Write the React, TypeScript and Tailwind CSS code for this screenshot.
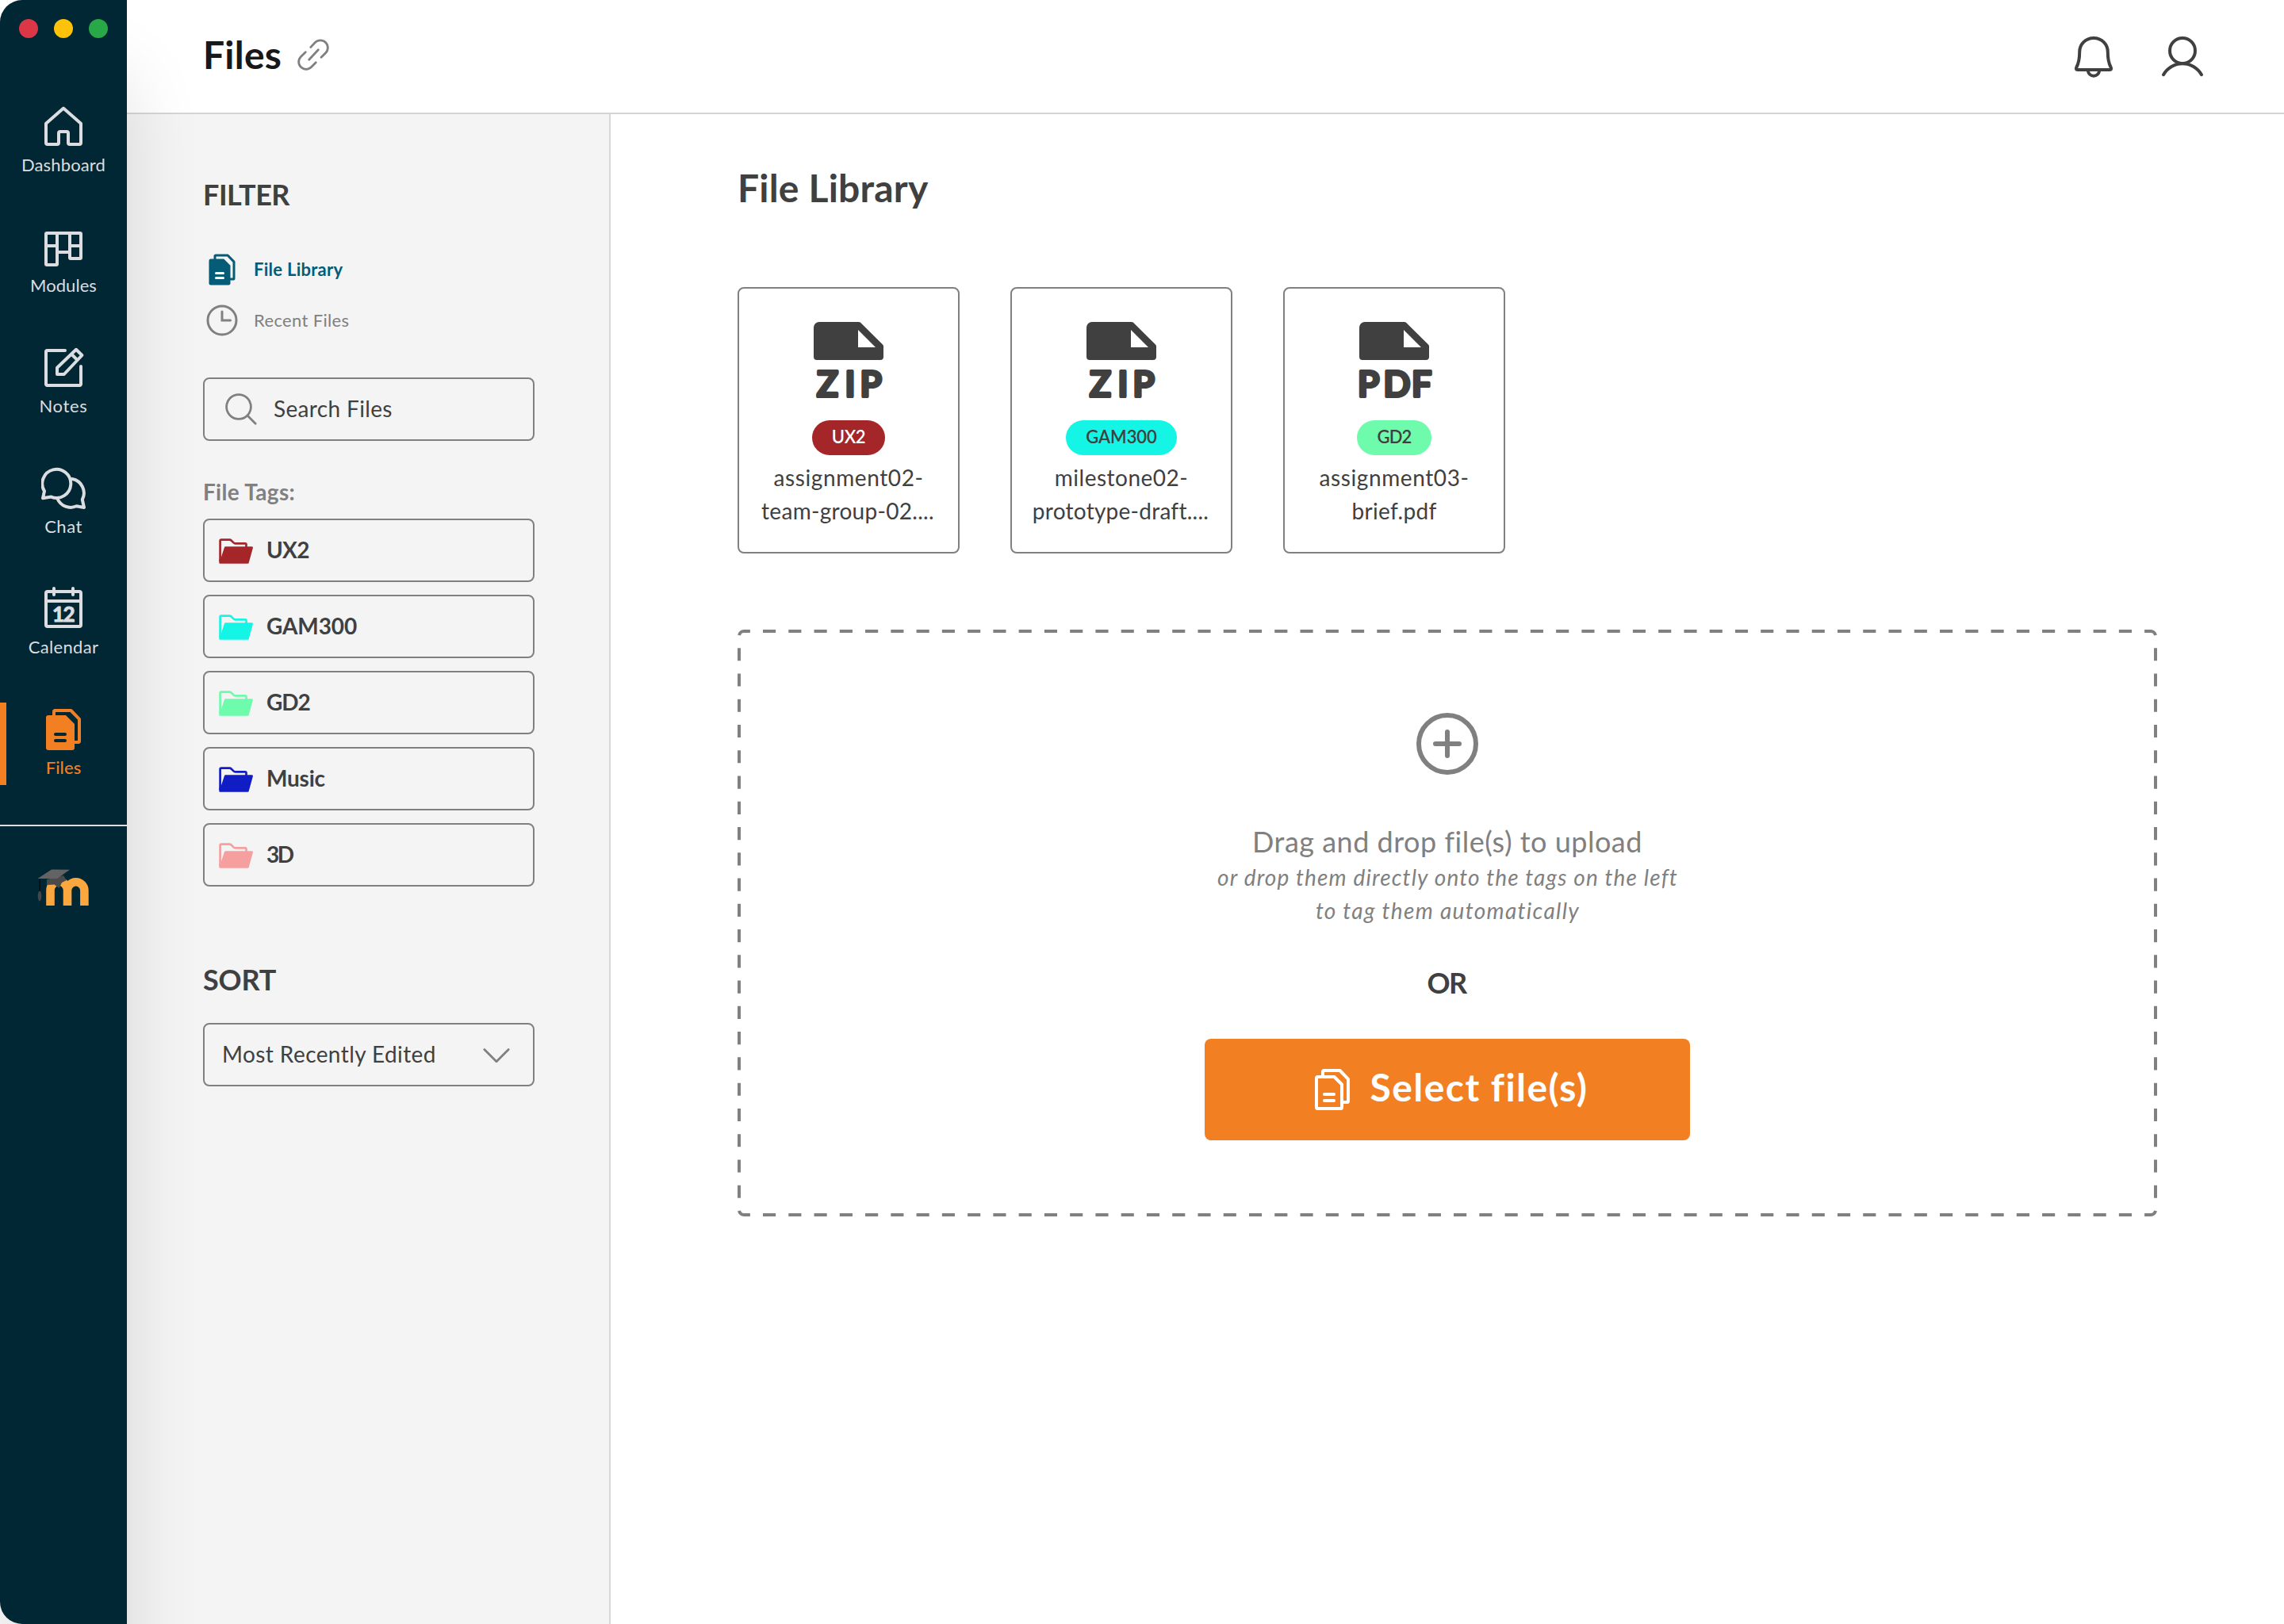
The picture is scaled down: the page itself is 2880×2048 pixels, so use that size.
import type { ReactNode } from "react";

type IconProps = { className?: string };

const HomeIcon = () => (
  <svg viewBox="0 0 56 56" className="size-14" fill="none" stroke="currentColor" strokeWidth="4" strokeLinecap="round" strokeLinejoin="round">
    <path d="M28 4.500 50 23.800V48a2 2 0 0 1-2 2H36a2 2 0 0 1-2-2V36a2 2 0 0 0-2-2h-8a2 2 0 0 0-2 2v12a2 2 0 0 1-2 2H8a2 2 0 0 1-2-2V23.800Z" />
  </svg>
);

const ModulesIcon = () => (
  <svg viewBox="0 0 56 56" className="size-14" fill="none" stroke="currentColor" strokeWidth="4" strokeLinejoin="round">
    <path d="M6 11a1 1 0 0 1 1-1h42a1 1 0 0 1 1 1v30a1 1 0 0 1-1 1H37a1 1 0 0 1-1-1V10M20 10v39a1 1 0 0 1-1 1H7a1 1 0 0 1-1-1V11M6 26h14M36 26h14M20 34h16" />
  </svg>
);

const NotesIcon = () => (
  <svg viewBox="0 0 56 56" className="size-14" fill="none" stroke="currentColor" strokeWidth="4" strokeLinecap="round" strokeLinejoin="round">
    <path d="M30 6H7.500A1.500 1.500 0 0 0 6 7.500v41A1.500 1.500 0 0 0 7.500 50h41a1.500 1.500 0 0 0 1.500-1.500V26" />
    <path d="M20 27.800 44 4.800l7.400 7.200-22.600 24H20Z" />
    <path strokeLinecap="butt" d="m38 10.500 7.600 7.600" />
  </svg>
);

const ChatIcon = () => (
  <svg viewBox="0 0 56 56" className="size-14" fill="none" stroke="currentColor" strokeWidth="4" strokeLinecap="round" strokeLinejoin="round">
    <path d="M2 40.200 4 31.400A18 18 0 1 1 12.600 38.600Z" />
    <path d="M39 16A18 18 0 0 1 51.800 42l2.200 10-9.600-1.700A18 18 0 0 1 20.500 41" />
  </svg>
);

const CalendarIcon = () => (
  <svg viewBox="0 0 56 56" className="size-14" fill="none" stroke="currentColor" strokeWidth="4" strokeLinecap="round">
    <rect x="6" y="6" width="44" height="44" rx="2" />
    <path d="M6 18h44M16 2v8M40 2v8" />
    <text x="27.500" y="43.600" textAnchor="middle" fill="currentColor" stroke="currentColor" strokeWidth="1" className="text-[26px] font-bold tracking-[-1.500px]">
      12
    </text>
  </svg>
);

const FilesIcon = ({ className = "size-14" }: IconProps) => (
  <svg viewBox="0 0 56 56" className={className} fill="none" strokeWidth="4" strokeLinecap="round" strokeLinejoin="round">
    <path stroke="currentColor" strokeLinecap="butt" d="M16 11V5.500A1.500 1.500 0 0 1 17.500 4H37.500L48 14.800V42.500a1.500 1.500 0 0 1-1.500 1.500H41" />
    <path fill="currentColor" d="M9 10h22l11 11v30a3 3 0 0 1-3 3H9a3 3 0 0 1-3-3V13a3 3 0 0 1 3-3Z" />
    <path className="stroke-(--line)" d="M18 34h12M18 42h12" />
  </svg>
);

const FilesOutlineIcon = () => (
  <svg viewBox="0 0 56 56" className="size-14" fill="none" stroke="currentColor" strokeWidth="4" strokeLinecap="round" strokeLinejoin="round">
    <path strokeLinecap="butt" d="M16 11V5.500A1.500 1.500 0 0 1 17.500 4H37.500L48 14.800V42.500a1.500 1.500 0 0 1-1.500 1.500H41" />
    <path d="M9.500 12H30.500L40 21.500V50.500a1.500 1.500 0 0 1-1.500 1.500H9.500A1.500 1.500 0 0 1 8 50.500V13.500A1.500 1.500 0 0 1 9.500 12Z" />
    <path d="M18 34h12M18 42h12" />
  </svg>
);

const MoodleLogo = () => (
  <svg viewBox="0 0 66 48" className="h-12 w-[66px]" fill="none">
    <path stroke="#faa73f" strokeWidth="10.600" d="M16.500 47V28a10.700 11.500 0 0 1 21.500 0V47M38 47V28a10.700 10.700 0 0 1 21.400 0V47" />
    <path fill="#4a4a4b" d="m12 14 21-5 4 6-6 3-3.500 7-6-4.500L12 21Z" />
    <path fill="#636364" d="M.5 13 18 1.500l23 .3L25 13Z" />
    <path stroke="#0c1013" strokeWidth="1.800" d="M3 13.500V30" />
    <ellipse cx="3" cy="35" rx="2.300" ry="6.500" fill="#42464d" />
  </svg>
);

const LinkIcon = () => (
  <svg viewBox="0 0 48 48" className="size-12" fill="none" stroke="currentColor" strokeWidth="2.800" strokeLinecap="round">
    <path d="m20.700 14.600 5.700-6A9.300 9.300 0 0 1 39.600 21.800L34 27.300M14.300 20.700l-5.900 5.700A9.300 9.300 0 0 0 21.600 39.600l5.700-5.900M18.700 30.300 30.300 17.700" />
  </svg>
);

const BellIcon = () => (
  <svg viewBox="0 0 56 56" className="size-14" fill="none" stroke="currentColor" strokeWidth="4" strokeLinecap="round" strokeLinejoin="round">
    <path d="M28 4C17.700 4 10.200 12 10.200 21.500 10.200 32 9 36 6.300 41 5.300 43 6.200 44 7.500 44h41c1.300 0 2.200-1 1.200-3-2.700-5-3.900-9-3.900-19.500C45.800 12 38.300 4 28 4Z" />
    <path d="M20.700 45c.7 4 3.600 6.800 7.300 6.800s6.600-2.800 7.300-6.800" />
  </svg>
);

const UserIcon = () => (
  <svg viewBox="0 0 56 56" className="size-14" fill="none" stroke="currentColor" strokeWidth="4" strokeLinecap="round">
    <circle cx="28" cy="20" r="16" />
    <path d="M4 50.200a27.600 27.600 0 0 1 48 0" />
  </svg>
);

const ClockIcon = () => (
  <svg viewBox="0 0 48 48" className="size-12" fill="none" stroke="currentColor" strokeWidth="3" strokeLinecap="round">
    <circle cx="24" cy="24" r="18" />
    <path d="M24 13v11h10.500" />
  </svg>
);

const SearchIcon = () => (
  <svg viewBox="0 0 48 48" className="size-12" fill="none" stroke="currentColor" strokeWidth="2.800" strokeLinecap="round">
    <circle cx="21" cy="21" r="15.400" />
    <path d="m32 32 10.200 10.200" />
  </svg>
);

const ChevronIcon = () => (
  <svg viewBox="0 0 48 48" className="size-12" fill="none" stroke="currentColor" strokeWidth="2.800" strokeLinecap="round" strokeLinejoin="round">
    <path d="M8.800 17.500 24 32.700l15.200-15.200" />
  </svg>
);

const FolderIcon = ({ className = "" }: IconProps) => (
  <svg viewBox="0 0 48 48" className={`size-12 ${className}`} fill="none">
    <path stroke="currentColor" strokeWidth="2.700" strokeLinejoin="round" d="M3.600 38V12.200a1.500 1.500 0 0 1 1.500-1.500H15.500c1 0 1.500.3 2.200.9l2.800 2.800c.6.600 1.200.9 2.200.9H35a1.500 1.500 0 0 1 1.500 1.500V21" />
    <path fill="currentColor" d="M10.600 19.300H43.600a1.400 1.400 0 0 1 1.300 1.800L39.700 39.700a1.300 1.300 0 0 1-1.200 1H3.500a1.200 1.200 0 0 1-1.200-1.200V36L4.600 33.500 8.900 20.500a1.700 1.700 0 0 1 1.700-1.200Z" />
  </svg>
);

const PlusCircleIcon = () => (
  <svg viewBox="0 0 96 96" className="size-24" fill="none" stroke="currentColor" strokeWidth="6" strokeLinecap="round">
    <circle cx="48" cy="48" r="36" />
    <path d="M48 33v30M33 48h30" />
  </svg>
);

const FileTypeIcon = ({ type }: { type: "ZIP" | "PDF" }) => (
  <svg viewBox="0 0 120 120" className="size-[120px]" fill="currentColor">
    <path fillRule="evenodd" d="M23 4H73a3 3 0 0 1 2 .8L103 32.500a3 3 0 0 1 1 2.200V48a4 4 0 0 1-4 4H20a4 4 0 0 1-4-4V11a7 7 0 0 1 7-7ZM72 14V36H94Z" />
    <text
      x={type === "ZIP" ? "20 55.500 74.500" : "14 46.500 82"}
      y="98"
      stroke="currentColor"
      strokeWidth="4"
      strokeLinejoin="round"
      className="text-[44.600px] font-semibold"
    >
      {type}
    </text>
  </svg>
);

const navItems: { label: string; icon: ReactNode; className: string; active?: boolean }[] = [
  { label: "Dashboard", icon: <HomeIcon />, className: "tracking-[0.15px]" },
  { label: "Modules", icon: <ModulesIcon />, className: "tracking-[0.06px]" },
  { label: "Notes", icon: <NotesIcon />, className: "tracking-[0.7px]" },
  { label: "Chat", icon: <ChatIcon />, className: "tracking-[0.5px]" },
  { label: "Calendar", icon: <CalendarIcon />, className: "tracking-[0.33px]" },
  { label: "Files", icon: <FilesIcon />, className: "tracking-[0.08px] font-medium", active: true },
];

const tags = [
  { name: "UX2", color: "text-[#a52629]", tracking: "tracking-[-0.7px]" },
  { name: "GAM300", color: "text-[#14f5e6]", tracking: "tracking-[-0.1px]" },
  { name: "GD2", color: "text-[#6efbab]", tracking: "tracking-[-1px]" },
  { name: "Music", color: "text-[#111dc4]", tracking: "tracking-[-0.2px]" },
  { name: "3D", color: "text-[#f59f9f]", tracking: "tracking-[-2.500px]" },
];

const files: { type: "ZIP" | "PDF"; tag: string; tagClass: string; lines: [string, string]; lineClass: [string, string] }[] = [
  {
    type: "ZIP",
    tag: "UX2",
    tagClass: "w-[92px] bg-[#a52629] text-white tracking-[-0.39px]",
    lines: ["assignment02-", "team-group-02...."],
    lineClass: ["tracking-[0.6px]", "tracking-[0.3px] mr-0.5"],
  },
  {
    type: "ZIP",
    tag: "GAM300",
    tagClass: "w-[140px] bg-[#14f5e6] text-[#404040] tracking-[-0.08px]",
    lines: ["milestone02-", "prototype-draft...."],
    lineClass: ["tracking-[0.5px]", "tracking-[0.25px] mr-0.5"],
  },
  {
    type: "PDF",
    tag: "GD2",
    tagClass: "w-[94px] bg-[#6efbab] text-[#404040] tracking-[-0.87px]",
    lines: ["assignment03-", "brief.pdf"],
    lineClass: ["tracking-[0.6px]", "tracking-[0.33px]"],
  },
];

const Sidebar = () => (
  <aside className="relative z-10 flex h-full w-40 shrink-0 flex-col rounded-l-[28px] bg-[#002733] text-[#dcdde0] shadow-[0_96px_96px_rgba(0,5,20,0.12)]">
    <div className="flex justify-center gap-5 pt-6">
      <span className="size-6 rounded-full bg-[#dc3747]" />
      <span className="size-6 rounded-full bg-[#ffc20a]" />
      <span className="size-6 rounded-full bg-[#29a847]" />
    </div>

    <nav className="mt-[78px] flex flex-col gap-12">
      {navItems.map((item) => (
        <a
          key={item.label}
          className={`relative flex h-[104px] flex-col items-center pt-1.5 [--line:#002733] ${item.active ? "text-[#f27f21]" : ""}`}
        >
          {item.active && <span className="absolute top-0 left-0 h-full w-2 bg-[#f27f21]" />}
          {item.icon}
          <span className={`mt-1.5 text-[22px] leading-7 ${item.className}`}>{item.label}</span>
        </a>
      ))}
    </nav>

    <div className="mt-[50px] h-0.5 bg-[#dcdde0]" />
    <div className="mt-[53px] ml-[47px]">
      <MoodleLogo />
    </div>
  </aside>
);

const Header = () => (
  <header className="flex h-36 shrink-0 items-center justify-between border-b-2 border-[#d5d5d5] pr-[100px] pl-24">
    <div className="flex items-center gap-4">
      <h1 className="-mt-[5px] text-[48px] leading-[60px] font-bold tracking-[0.25px] text-[#181818]">Files</h1>
      <span className="-mt-1 text-[#808080]">
        <LinkIcon />
      </span>
    </div>
    <div className="flex gap-14 pt-0.5 text-[#404040]">
      <BellIcon />
      <UserIcon />
    </div>
  </header>
);

const FilterPanel = () => (
  <section className="flex w-[610px] shrink-0 flex-col border-r-2 border-[#d8d8d8] bg-[#f4f4f4] pt-[79px] pr-[94px] pl-24 text-[28px] text-[#404040]">
    <h2 className="text-[36px] leading-[44px] font-bold tracking-[-0.500px]">FILTER</h2>

    <div className="mt-[49px] flex flex-col gap-4 text-[22px]">
      <a className="flex h-12 items-center gap-4 font-bold tracking-[0.27px] text-[#045c76] [--line:#ffffff]">
        <span className="flex size-12 items-center justify-center">
          <FilesIcon className="size-[42px]" />
        </span>
        <span className="pb-0.5">File Library</span>
      </a>
      <a className="flex h-12 items-center gap-4 tracking-[0.35px] text-[#808080]">
        <ClockIcon />
        <span className="pb-0.5">Recent Files</span>
      </a>
    </div>

    <div className="mt-12 flex h-20 items-center gap-4 rounded-lg border-2 border-[#808080] pl-[22px]">
      <span className="text-[#808080]">
        <SearchIcon />
      </span>
      <span className="pb-0.5 pl-px tracking-[0.35px]">Search Files</span>
    </div>

    <p className="mt-11 leading-10 font-bold tracking-[0.3px] text-[#808080]">File Tags:</p>
    <div className="mt-3.5 flex flex-col gap-4">
      {tags.map((tag) => (
        <div key={tag.name} className="flex h-20 items-center gap-3.5 rounded-lg border-2 border-[#808080] pl-4">
          <FolderIcon className={tag.color} />
          <span className={`pb-0.5 font-bold ${tag.tracking}`}>{tag.name}</span>
        </div>
      ))}
    </div>

    <h2 className="mt-[95px] text-[36px] leading-[44px] font-bold tracking-[-0.2px]">SORT</h2>
    <div className="mt-[33px] flex h-20 items-center justify-between rounded-lg border-2 border-[#808080] px-[22px]">
      <span className="pb-0.5 tracking-[0.42px]">Most Recently Edited</span>
      <span className="text-[#808080]">
        <ChevronIcon />
      </span>
    </div>
  </section>
);

const DropZone = () => (
  <div className="relative mt-24 flex h-[740px] flex-col items-center pt-24 text-[#808080]">
    <svg viewBox="0 0 1790 740" className="absolute inset-0 size-full" fill="none">
      <path
        d="M895 2H1782a6 6 0 0 1 6 6V732a6 6 0 0 1-6 6H8a6 6 0 0 1-6-6V8A6 6 0 0 1 8 2Z"
        stroke="#808080"
        strokeWidth="4"
        pathLength={4992}
        strokeDasharray="16 16"
        strokeDashoffset="-8"
      />
    </svg>
    <PlusCircleIcon />
    <p className="mt-[51px] text-[36px] leading-[48px] tracking-[0.5px]">Drag and drop file(s) to upload</p>
    <p className="pl-px text-center text-[28px] leading-[42px] italic">
      <span className="tracking-[1.15px]">or drop them directly onto the tags on the left</span>
      <br />
      <span className="tracking-[1.33px]">to tag them automatically</span>
    </p>
    <p className="mt-12 pr-0.5 text-[36px] leading-[44px] font-bold tracking-[-1.500px] text-[#404040]">OR</p>
    <button className="mt-[49px] flex h-32 w-[612px] items-center justify-center gap-5 rounded-lg bg-[#f27f21] pl-1 text-white">
      <FilesOutlineIcon />
      <span className="pb-1.5 text-[48px] leading-[60px] font-bold tracking-[1.45px]">Select file(s)</span>
    </button>
  </div>
);

const FileLibrary = () => (
  <main className="flex-1 px-40 pt-[63px] text-[#404040]">
    <h2 className="text-[48px] leading-[60px] font-bold tracking-[0.2px]">File Library</h2>

    <div className="mt-[95px] flex gap-16">
      {files.map((file) => (
        <div key={file.lines[0]} className="flex h-[336px] w-[280px] flex-col items-center rounded-lg border-2 border-[#808080] pt-[38px]">
          <FileTypeIcon type={file.type} />
          <span className={`mt-2 flex h-11 items-center justify-center rounded-full pb-1 text-[22px] font-semibold ${file.tagClass}`}>
            {file.tag}
          </span>
          <p className="mt-[7px] text-center text-[28px] leading-[42px]">
            <span className={file.lineClass[0]}>{file.lines[0]}</span>
            <br />
            <span className={file.lineClass[1]}>{file.lines[1]}</span>
          </p>
        </div>
      ))}
    </div>

    <DropZone />
  </main>
);

export default function App() {
  return (
    <div className="flex h-[2048px] w-[2880px] overflow-hidden bg-white font-['Lato',sans-serif]">
      <Sidebar />
      <div className="flex flex-1 flex-col">
        <Header />
        <div className="flex flex-1">
          <FilterPanel />
          <FileLibrary />
        </div>
      </div>
    </div>
  );
}
